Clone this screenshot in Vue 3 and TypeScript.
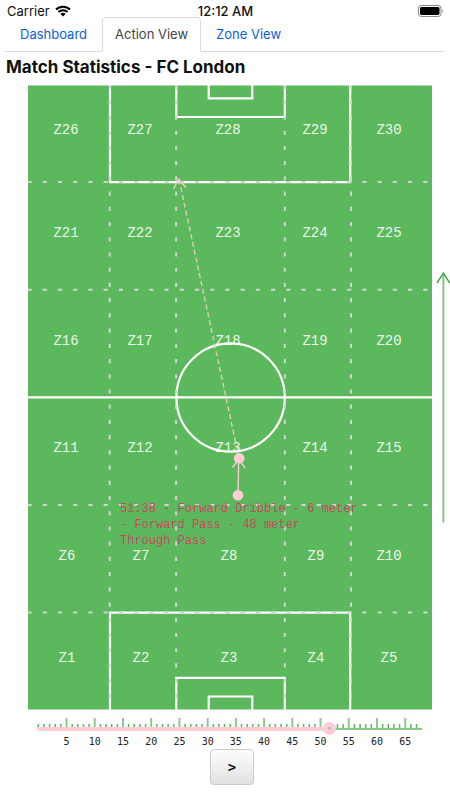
<script setup lang="ts">
import { computed, ref } from 'vue'

interface Zone {
  id: string
  x: number
  y: number
}

const tabs = ['Dashboard', 'Action View', 'Zone View']
const activeTab = ref('Action View')

const columnCentres = [66, 140, 228, 315, 389]
const rowBaselines = [662, 560, 452, 345, 237, 134]
const zones: Zone[] = rowBaselines.flatMap((y, row) =>
  columnCentres.map((x, col) => {
    const n = row * 5 + col + 1
    return { id: `Z${n}`, x: n < 10 && n !== 5 ? x + 1 : x, y: y - 85 }
  }),
)

const columnLines = [109.7, 176.1, 284.8, 351]
const rowLines = [97, 204.7, 420, 527.5]

const description = [
  '51:38 - Forward Dribble - 6 meter',
  '- Forward Pass - 48 meter',
  'Through Pass',
]

const maxMinute = 68
const minute = ref(51.63)
const tickX = (m: number) => 38.3 + m * 5.645
const minutes = Array.from({ length: maxMinute }, (_, i) => i)
const labelled = minutes.filter((m) => m > 0 && m % 5 === 0)
const played = computed(() => `${(minute.value / maxMinute) * 100}%`)

function next() {
  minute.value = Math.min(maxMinute, minute.value + 1)
}
</script>

<template>
  <div class="screen">
    <header class="status">
      <div class="carrier">
        <span>Carrier</span>
        <svg class="wifi" viewBox="0 0 16 12" aria-hidden="true">
          <path d="M1 4.5 A10 10 0 0 1 15 4.5" />
          <path d="M3.4 7 A6.6 6.6 0 0 1 12.6 7" />
          <path class="solid" d="M8 11.6 L5.4 9 A3.7 3.7 0 0 1 10.6 9 Z" />
        </svg>
      </div>
      <span class="clock">12:12 AM</span>
      <svg class="battery" viewBox="0 0 26 12" aria-hidden="true">
        <rect class="case" x="0.5" y="0.5" width="22.5" height="11" rx="2.7" />
        <rect x="2" y="2" width="19.5" height="8" rx="1.4" />
        <path class="cap" d="M24.3 4 Q25.8 6 24.3 8 Z" />
      </svg>
    </header>

    <nav class="tabs">
      <a
        v-for="tab in tabs"
        :key="tab"
        href="#"
        class="tab"
        :class="{ active: tab === activeTab }"
        @click.prevent="activeTab = tab"
      >{{ tab }}</a>
    </nav>

    <h1>Match Statistics - FC London</h1>

    <svg class="pitch" viewBox="0 0 450 626" role="img" aria-label="Pitch">
      <rect class="grass" x="28" y="0.5" width="404" height="624" />
      <path class="sliver" d="M26.8 1 V7" />
      <g class="lines">
        <path d="M28 312.4 H432" />
        <path d="M110 0 V97.2 H350.2 V0" />
        <path d="M176.3 0 V32 H284.8 V0" />
        <path d="M208.7 0 V13.3 H252.3 V0" />
        <path d="M110 624.5 V527.6 H350.2 V624.5" />
        <path d="M176.3 624.5 V592.8 H284.8 V624.5" />
        <path d="M208.7 624.5 V611.5 H252.3 V624.5" />
        <circle cx="230.6" cy="312.5" r="54.2" />
      </g>
      <g class="zone-lines">
        <path v-for="x in columnLines" :key="`c${x}`" :d="`M${x} 0 V624.5`" />
        <path v-for="y in rowLines" :key="`r${y}`" :d="`M27.5 ${y} H432`" />
      </g>
      <text v-for="z in zones" :key="z.id" class="zone" :x="z.x" :y="z.y">{{ z.id }}</text>
      <text class="note">
        <tspan v-for="(line, i) in description" :key="line" x="120" :y="427 + i * 16">{{ line }}</tspan>
      </text>
      <g class="action">
        <path class="pass" d="M239 373 L179 94" />
        <path d="M173.5 104 L178.5 94 L186 102.5" />
        <path d="M238 410 L238.7 375" />
        <path d="M232.5 382.5 L239 374 L245 383" />
        <circle cx="239.2" cy="373.3" r="5.3" />
        <circle cx="238" cy="410.3" r="5.3" />
      </g>
      <g class="direction">
        <path class="shaft" d="M443.4 188 V437.5" />
        <path d="M437 198 L443.4 188 L449.8 198" />
      </g>
    </svg>

    <div class="timeline">
      <svg class="scale" viewBox="0 0 450 36" aria-hidden="true">
        <path
          v-for="m in minutes"
          :key="m"
          :class="m > 0 && m % 5 === 0 ? 'major' : 'minor'"
          :d="`M${tickX(m)} ${m > 0 && m % 5 === 0 ? 7 : 13} V17`"
        />
        <path class="base" d="M37.5 18 H422" />
        <text v-for="m in labelled" :key="`t${m}`" :x="tickX(m)" y="34">{{ m }}</text>
      </svg>
      <input
        v-model.number="minute"
        class="slider"
        type="range"
        min="0"
        :max="maxMinute"
        step="0.01"
        aria-label="Match minute"
        :style="{ '--played': played }"
      />
    </div>

    <button class="next" type="button" @click="next">&gt;</button>
  </div>
</template>

<style>
body {
  background: #fff;
}
</style>

<style scoped>
.screen {
  display: flex;
  flex-direction: column;
  font-family: Inter, "Liberation Sans", sans-serif;
  color: #111;
}

.status {
  display: grid;
  grid-template-columns: 1fr auto 1fr;
  align-items: center;
  height: 17px;
  padding: 3px 6px 0 7px;
  box-sizing: border-box;
  font-size: 13px;
  line-height: 16px;
}

.carrier {
  display: flex;
  align-items: center;
  gap: 5px;
}

.clock {
  font-weight: 500;
}

.wifi {
  width: 16px;
  height: 12px;
}

.wifi path {
  fill: none;
  stroke: #000;
  stroke-width: 2;
}

.wifi .solid {
  fill: #000;
  stroke: none;
}

.battery {
  width: 26px;
  height: 12px;
  justify-self: end;
}

.battery .case {
  fill: none;
  stroke: #888;
}

.battery .cap {
  fill: #777;
}

.tabs {
  display: flex;
  margin: 0 5px;
  border-bottom: 1px solid #d9dcdf;
}

.tab {
  padding: 8px 14px;
  margin-bottom: -1px;
  border: 1px solid transparent;
  border-radius: 4px 4px 0 0;
  font-size: 13px;
  line-height: 17px;
  color: #0b62dc;
  text-decoration: none;
}

.tab.active {
  padding: 8px 12px;
  background: #fff;
  border-color: #d9dcdf #d9dcdf #fff;
  color: #444;
}

h1 {
  margin: 4px 6px 7px;
  font-size: 17px;
  line-height: 22px;
  font-weight: 700;
}

.pitch {
  display: block;
  width: 100%;
}

.grass {
  fill: #5cb85c;
}

.sliver {
  stroke: #ffccd8;
}

.lines {
  fill: none;
  stroke: #fff;
  stroke-width: 2.2;
}

.zone-lines {
  fill: none;
  stroke: #d3d3d3;
  stroke-width: 2;
  stroke-dasharray: 4.2 11.02;
}

.zone {
  fill: #fff;
  fill-opacity: 0.9;
  font: 14px "Liberation Mono", monospace;
  text-anchor: middle;
}

.note {
  fill: #cb4560;
  font: 12px "Liberation Mono", monospace;
}

.action {
  fill: none;
  stroke: #f6cbd0;
  stroke-width: 1.4;
}

.action .pass {
  stroke: #e3cab5;
  stroke-width: 1.4;
  stroke-dasharray: 5 3;
}

.action circle {
  fill: #ffccd8;
  stroke: none;
}

.direction {
  fill: none;
  stroke: #42a542;
  stroke-width: 1.4;
}

.direction .shaft {
  stroke: #86c586;
  stroke-width: 2;
}

.timeline {
  display: grid;
}

.scale,
.slider {
  grid-area: 1 / 1;
}

.scale {
  display: block;
  width: 100%;
}

.scale path {
  stroke: #5cb85c;
  stroke-width: 1.5;
}

.scale .major {
  stroke: #8ccb8c;
  stroke-width: 2;
}

.scale text {
  fill: #222;
  font: 10px "DejaVu Sans Mono", monospace;
  text-anchor: middle;
}

.slider {
  appearance: none;
  justify-self: center;
  width: 88%;
  height: 13px;
  margin: 11px 0 0 10px;
  background: none;
}

.slider::-webkit-slider-runnable-track {
  height: 4px;
  background: linear-gradient(#ffccd8, #ffccd8) 6px 0 / calc(var(--played) - 6px) 100% no-repeat;
}

.slider::-webkit-slider-thumb {
  appearance: none;
  width: 13px;
  height: 13px;
  margin-top: -5px;
  border-radius: 50%;
  background: radial-gradient(circle, #a9c99b 0 1px, #ffccd8 2px);
}

.next {
  align-self: center;
  width: 44px;
  height: 36px;
  margin: 2px 0 0 14px;
  padding: 0;
  border: 1px solid #ccc;
  border-radius: 4px;
  background: linear-gradient(#fdfdfd, #e1e1e1);
  box-shadow: 0 1px 1px #ddd;
  font: bold 14px "DejaVu Sans Mono", monospace;
  color: #111;
}
</style>
